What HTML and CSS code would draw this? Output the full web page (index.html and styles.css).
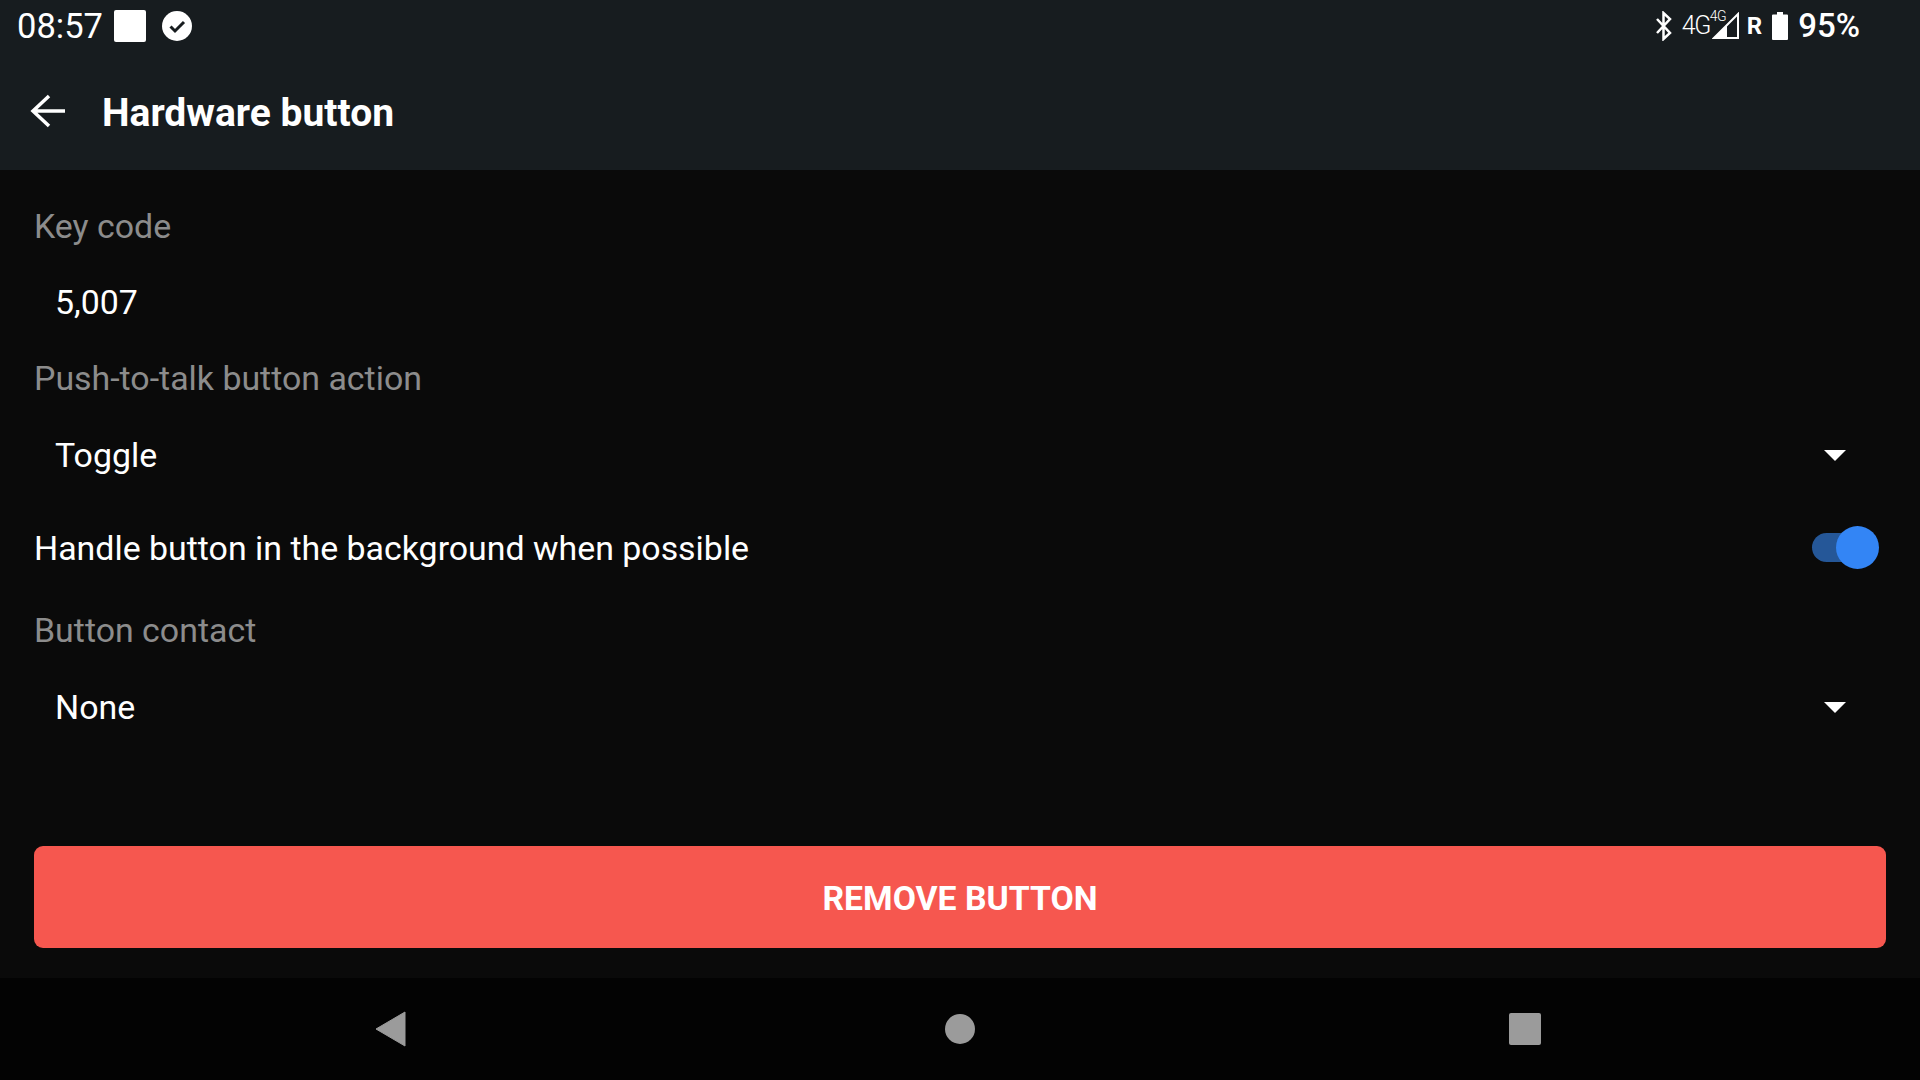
FILE: index.html
```html
<!DOCTYPE html>
<html lang="en">
<head>
  <meta charset="UTF-8" />
  <title>Hardware button</title>
  <link rel="stylesheet" href="styles.css">
</head>
<body>
  <header class="top">
    <div class="status">
      <div class="status-left">
        <span class="clock">08:57</span>
        <span class="note-icon"></span>
        <svg class="check-icon" width="32" height="32" viewBox="0 0 32 32">
          <circle cx="16" cy="16" r="15" fill="#fff"/>
          <path d="M9.500 16.500l4.500 4.500 9-9" fill="none" stroke="#171c1f" stroke-width="3"/>
        </svg>
      </div>
      <div class="status-right">
        <svg width="18" height="30" viewBox="0 0 18 30">
          <path d="M2 8l13 14-6.500 6V2L15 8 2 22" fill="none" stroke="#fff" stroke-width="2.500"/>
        </svg>
        <span class="net">4G</span>
        <span class="signal">
          <span class="net-small">4G</span>
          <svg width="28" height="28" viewBox="0 0 28 28">
            <path d="M26 2v24H2z" fill="none" stroke="#fff" stroke-width="2"/>
            <path d="M15 13v13H2z" fill="#fff"/>
          </svg>
        </span>
        <span class="roaming">R</span>
        <svg class="battery" width="16" height="28" viewBox="0 0 16 28">
          <path d="M5 0h6v2.500h4a1 1 0 0 1 1 1V27a1 1 0 0 1-1 1H1a1 1 0 0 1-1-1V3.500a1 1 0 0 1 1-1h4z" fill="#fff"/>
        </svg>
        <span class="percent">95%</span>
      </div>
    </div>
    <div class="toolbar">
      <svg class="back" width="36" height="34" viewBox="0 0 36 34">
        <path d="M35 17H3M19 2L3 17l16 15" fill="none" stroke="#fff" stroke-width="3.500"/>
      </svg>
      <h1>Hardware button</h1>
    </div>
  </header>

  <main class="content">
    <div class="row label">Key code</div>
    <div class="row value">5,007</div>
    <div class="row label">Push-to-talk button action</div>
    <div class="row value select">Toggle <span class="caret"></span></div>
    <div class="row switch-row">
      Handle button in the background when possible
      <span class="switch"><span class="thumb"></span></span>
    </div>
    <div class="row label contact">Button contact</div>
    <div class="row value select spaced">None <span class="caret"></span></div>
    <button class="remove">REMOVE BUTTON</button>
  </main>

  <nav class="navbar">
    <svg width="31" height="36" viewBox="0 0 31 36"><path d="M30 1v34L1 18z" fill="#9b9b9b" stroke="#9b9b9b" stroke-linejoin="round"/></svg>
    <span class="nav-home"></span>
    <span class="nav-recent"></span>
  </nav>
</body>
</html>
```

FILE: styles.css
```css
html, body {
  margin: 0;
  height: 1080px;
  overflow: hidden;
}
body {
  background: #0a0a0a;
  color: #fff;
  font-family: Roboto, "Liberation Sans", sans-serif;
  display: flex;
  flex-direction: column;
}
.top {
  background: #171c1f;
  height: 170px;
  flex: none;
}
.status {
  height: 51px;
  display: flex;
  justify-content: space-between;
  align-items: center;
  padding: 0 60px 0 17px;
}
.status-left, .status-right {
  display: flex;
  align-items: center;
}
.clock {
  font-size: 34.500px;
}
.note-icon {
  width: 32px;
  height: 32px;
  background: #fff;
  border-radius: 2px;
  margin-left: 11px;
}
.check-icon {
  margin-left: 15px;
}
.net {
  font-size: 25px;
  font-weight: 300;
  letter-spacing: -1.500px;
  margin-left: 9px;
}
.signal {
  position: relative;
  display: flex;
  margin-left: 2px;
}
.net-small {
  position: absolute;
  left: -2px;
  top: -4px;
  font-size: 14px;
  font-weight: 300;
  letter-spacing: -0.500px;
}
.roaming {
  font-size: 24px;
  font-weight: 700;
  margin-left: 7px;
}
.battery {
  margin-left: 10px;
}
.percent {
  font-size: 33px;
  font-weight: 500;
  margin-left: 10px;
}
.toolbar {
  height: 119px;
  display: flex;
  align-items: center;
  padding-left: 30px;
}
.toolbar h1 {
  margin: 4px 0 0 36px;
  font-size: 39px;
  font-weight: 700;
}
.content {
  flex: 1;
  padding: 18px 34px 0;
  font-size: 33.900px;
}
.row {
  height: 76px;
  display: flex;
  align-items: center;
  justify-content: space-between;
}
.label {
  color: #8c8c8c;
}
.value {
  padding-left: 21px;
  padding-right: 40px;
}
.select {
  height: 77px;
  box-sizing: border-box;
  padding-top: 2px;
}
.spaced {
  margin-top: 11px;
}
.switch-row {
  height: 110px;
}
.contact {
  height: 54px;
}
.caret {
  border-left: 11px solid transparent;
  border-right: 11px solid transparent;
  border-top: 11px solid #fff;
}
.switch {
  position: relative;
  width: 59px;
  height: 29px;
  background: #255798;
  border-radius: 15px;
  margin: 0 15px 2px 0;
}
.thumb {
  position: absolute;
  right: -8px;
  top: -7px;
  width: 43px;
  height: 43px;
  background: #3385f5;
  border-radius: 50%;
}
.remove {
  display: block;
  width: 100%;
  height: 102px;
  margin-top: 101px;
  padding-top: 3px;
  background: #f6574f;
  border: none;
  border-radius: 9px;
  color: #fff;
  font-family: inherit;
  font-size: 33.750px;
  font-weight: 700;
}
.navbar {
  height: 102px;
  flex: none;
  background: #030303;
  display: flex;
  align-items: center;
  justify-content: space-between;
  padding: 0 379px 0 375px;
}
.nav-home {
  width: 30px;
  height: 30px;
  background: #9b9b9b;
  border-radius: 50%;
  margin-left: 5px;
}
.nav-recent {
  width: 32px;
  height: 32px;
  background: #9b9b9b;
  border-radius: 2px;
}
```
